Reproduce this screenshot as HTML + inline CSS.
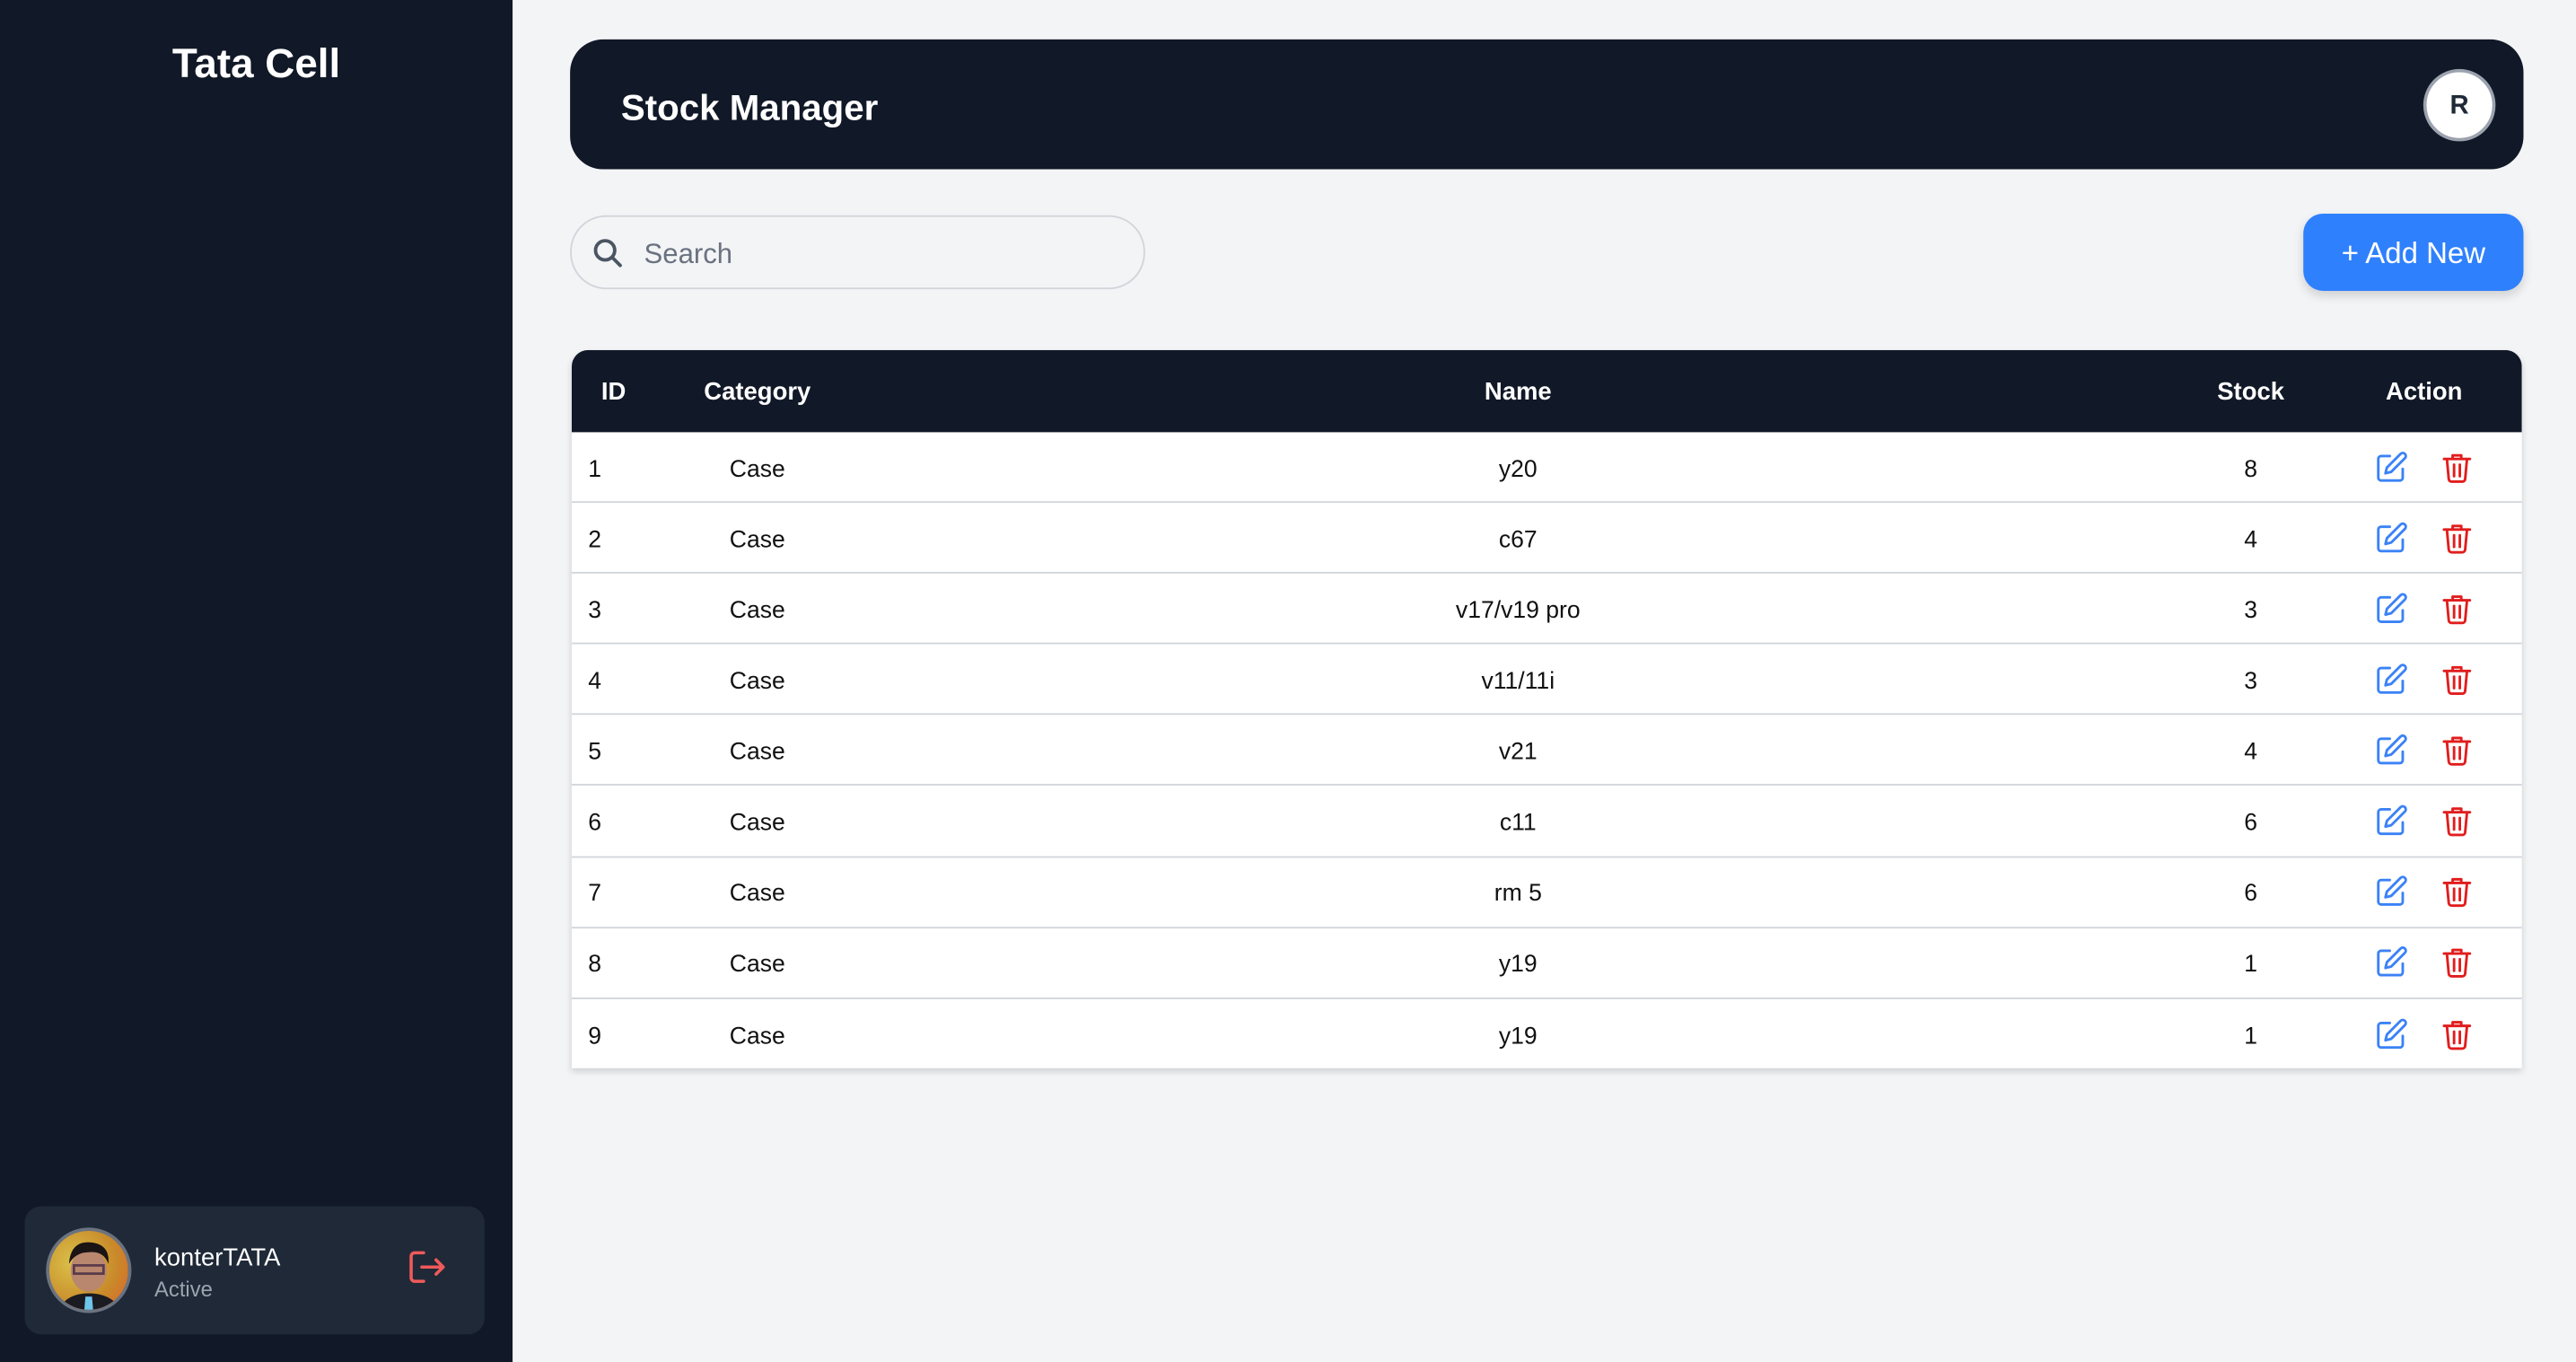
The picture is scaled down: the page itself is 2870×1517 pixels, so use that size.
<!DOCTYPE html>
<html><head><meta charset="utf-8"><style>
*{box-sizing:border-box;margin:0;padding:0}
html,body{width:2870px;height:1517px;overflow:hidden;background:#f3f4f6;font-family:"Liberation Sans",sans-serif}
#w{position:absolute;left:0;top:0;width:1568px;height:829px;transform:scale(1.8304);transform-origin:0 0}
.side{position:absolute;left:0;top:0;width:312px;height:829px;background:#111827}
.side h1{position:absolute;top:25px;width:100%;text-align:center;color:#fff;font-size:25px;font-weight:bold}
.card{position:absolute;left:15px;top:734px;width:280px;height:78px;background:#1f2937;border-radius:10px}
.av{position:absolute;left:13px;top:13px;width:52px;height:52px;border-radius:50%;border:2px solid #6b7280;overflow:hidden;background:radial-gradient(circle at 30% 40%,#d9c24a,#c98a2a 60%,#e0602a)}
.nm{position:absolute;left:79px;top:23px;color:#fff;font-size:15px}
.ac{position:absolute;left:79px;top:43px;color:#9ca3af;font-size:13px}
.hd{position:absolute;left:347px;top:24px;width:1189px;height:79px;background:#111827;border-radius:20px}
.hd h2{position:absolute;left:31px;top:29px;color:#fff;font-size:22px;font-weight:bold}
.r{position:absolute;right:17px;top:18px;width:44px;height:44px;border-radius:50%;background:#fff;border:2px solid #9ca3af;text-align:center;line-height:42px;font-size:16px;font-weight:bold;color:#1f2937}
.sr{position:absolute;left:347px;top:131px;width:350px;height:45px;border:1px solid #d1d5db;border-radius:22px}
.sr span{position:absolute;left:44px;top:13px;font-size:17px;color:#6b7280}
.btn{position:absolute;left:1402px;top:130px;width:134px;height:47px;background:#2f80fd;border-radius:12px;color:#fff;font-size:18px;text-align:center;line-height:49px;box-shadow:0 3px 6px rgba(0,0,0,.15)}
.tb{position:absolute;left:348px;top:213px;width:1187px;height:437px;background:#fff;border-radius:10px 10px 0 0;box-shadow:0 2px 4px rgba(0,0,0,.15);overflow:hidden}
.row{position:relative;height:43.1px;border-bottom:1px solid #d1d5db;font-size:14.5px;color:#111}
.row:last-child{border-bottom:none}
.th{height:50px;background:#111827;color:#fff;font-weight:bold;border:none;font-size:15px}
.row div{position:absolute;top:0;height:100%;display:flex;align-items:center;justify-content:center;padding-top:3px}
.th div{padding-top:1px}
.c1{left:0;width:50px;justify-content:flex-start!important;padding-left:10px}
.th .c1{padding-left:18px}
.c2{left:50px;width:126px}.c3{left:176px;width:800px}.c4{left:976px;width:92px}.c5{left:1068px;width:119px;gap:19px;padding-top:0!important}
</style></head><body><div id="w">
<div class="side"><h1>Tata Cell</h1>
<div class="card"><div class="av"><svg width="52" height="52" viewBox="0 0 52 52"><ellipse cx="24" cy="24" rx="11" ry="13" fill="#b9866e"/><path d="M12 20 Q13 6 25 7 Q37 8 36 20 Q33 12 24 13 Q16 13 12 20Z" fill="#1a1414"/><rect x="15" y="21" width="18" height="5" fill="none" stroke="#5a3a4a" stroke-width="1.5"/><path d="M4 52 Q8 38 24 38 Q40 38 46 52Z" fill="#1b1b22"/><path d="M22 40 L26 40 L27 52 L21 52Z" fill="#6ec6ea"/></svg></div>
<div class="nm">konterTATA</div><div class="ac">Active</div>
<svg style="position:absolute;left:232px;top:24px" width="26" height="26" viewBox="0 0 24 24" fill="none" stroke="#f05a5a" stroke-width="1.8" stroke-linecap="round" stroke-linejoin="round"><path d="M10 4H5a2 2 0 0 0-2 2v12a2 2 0 0 0 2 2h5"/><path d="M9 12h12M17 8l4 4-4 4"/></svg></div>
</div>
<div class="hd"><h2>Stock Manager</h2><div class="r">R</div></div>
<div class="sr"><svg style="position:absolute;left:12px;top:12px" width="20" height="20" viewBox="0 0 24 24" fill="none" stroke="#4b5563" stroke-width="2.5" stroke-linecap="round"><circle cx="10" cy="10" r="7"/><path d="M15 15l6 6"/></svg><span>Search</span></div>
<div class="btn">+ Add New</div>
<div class="tb">
<div class="row th"><div class="c1">ID</div><div class="c2">Category</div><div class="c3">Name</div><div class="c4">Stock</div><div class="c5">Action</div></div>
ROWS
</div>
</div>
<script>
var d=[["1","y20","8"],["2","c67","4"],["3","v17/v19 pro","3"],["4","v11/11i","3"],["5","v21","4"],["6","c11","6"],["7","rm 5","6"],["8","y19","1"],["9","y19","1"]];
var e='<svg width="21" height="21" viewBox="0 0 24 24" fill="none" stroke="#3b82f6" stroke-width="1.8" stroke-linecap="round" stroke-linejoin="round"><path d="M11 4H5a2 2 0 0 0-2 2v13a2 2 0 0 0 2 2h13a2 2 0 0 0 2-2v-6"/><path d="M18.5 2.5a2.1 2.1 0 0 1 3 3L12 15l-4 1 1-4z"/></svg>';
var t='<svg width="21" height="21" viewBox="0 0 24 24" fill="none" stroke="#e11d1d" stroke-width="1.8" stroke-linecap="round" stroke-linejoin="round"><path d="M3 6h18M9 6V3.5h6V6M5 6l1.3 14a2 2 0 0 0 2 1.8h7.4a2 2 0 0 0 2-1.8L19 6M10 10v8M14 10v8"/></svg>';
var h='';d.forEach(function(r){h+='<div class="row"><div class="c1">'+r[0]+'</div><div class="c2">Case</div><div class="c3">'+r[1]+'</div><div class="c4">'+r[2]+'</div><div class="c5">'+e+t+'</div></div>'});
var tb=document.querySelector('.tb');tb.innerHTML=tb.innerHTML.replace('ROWS',h);
</script>
</body></html>
